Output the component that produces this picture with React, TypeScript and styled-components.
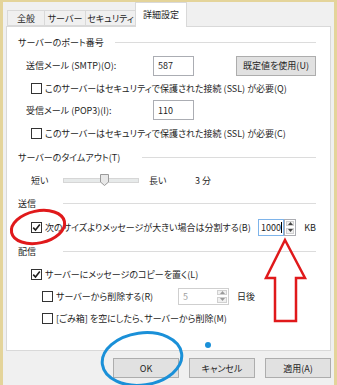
import React from "react";
import styled, { createGlobalStyle } from "styled-components";

const GlobalStyle = createGlobalStyle`
  html, body {
    margin: 0;
    padding: 0;
    background: #f0f0f0;
  }
  body {
    font-family: "Noto Sans CJK JP", "Noto Sans", sans-serif;
    font-size: 9px;
    font-feature-settings: "palt";
    color: #1e1e1e;
  }
`;

const Window = styled.div`
  position: relative;
  width: 337px;
  height: 385px;
  box-sizing: border-box;
  background: #f0f0f0;
  border-top: 2px solid #e4d49a;
  border-left: 3px solid #e4d49a;
  border-right: 3px solid #e4d49a;
  display: flex;
  flex-direction: column;
  overflow: hidden;
`;

const TabStrip = styled.div`
  display: flex;
  align-items: flex-end;
  height: 25px;
  padding-left: 5px;
  margin-bottom: -1px;
  position: relative;
  z-index: 1;
`;

const Tab = styled.div<{ $active?: boolean; $w: number }>`
  box-sizing: border-box;
  width: ${(p) => p.$w}px;
  height: ${(p) => (p.$active ? 25 : 16)}px;
  margin-bottom: ${(p) => (p.$active ? 0 : 1)}px;
  padding-top: ${(p) => (p.$active ? 5 : 0)}px;
  background: ${(p) => (p.$active ? "#fff" : "#f0f0f0")};
  border: 1px solid #d9d9d9;
  border-bottom: ${(p) => (p.$active ? "none" : "1px solid #d9d9d9")};
  margin-left: -1px;
  display: flex;
  align-items: ${(p) => (p.$active ? "flex-start" : "center")};
  justify-content: center;
  line-height: 13px;
  white-space: nowrap;
`;

const Panel = styled.div`
  box-sizing: border-box;
  margin-left: 3px;
  width: 325px;
  height: 325px;
  background: #fff;
  border: 1px solid #d9d9d9;
  padding: 3px 14px 0 11px;
  display: flex;
  flex-direction: column;
`;

const Row = styled.div<{ $h: number; $indent?: number }>`
  height: ${(p) => p.$h}px;
  display: flex;
  align-items: center;
  padding-left: ${(p) => p.$indent ?? 0}px;
  white-space: nowrap;
`;

const HeaderLabel = styled.span<{ $w: number }>`
  width: ${(p) => p.$w}px;
  flex: none;
`;

const HeaderLine = styled.div`
  flex: 1;
  height: 1px;
  background: #dcdcdc;
`;

const FieldLabel = styled.span<{ $w?: number }>`
  width: ${(p) => (p.$w ? `${p.$w}px` : "auto")};
  flex: none;
`;

const TextBox = styled.div<{ $w: number; $h?: number; $focus?: boolean }>`
  box-sizing: border-box;
  width: ${(p) => p.$w}px;
  height: ${(p) => p.$h ?? 20}px;
  border: 1px solid ${(p) => (p.$focus ? "#7eb4ea" : "#abadb3")};
  background: #fff;
  display: flex;
  align-items: center;
  padding-left: ${(p) => (p.$focus ? 2 : 4)}px;
`;

const Caret = styled.span`
  display: inline-block;
  width: 1px;
  height: 11px;
  background: #000;
`;

const PushButton = styled.button<{ $w: number }>`
  box-sizing: border-box;
  width: ${(p) => p.$w}px;
  height: 20px;
  padding: 0;
  border: 1px solid #adadad;
  background: #e1e1e1;
  font-family: inherit;
  font-size: 9px;
  color: #1e1e1e;
  font-feature-settings: "palt";
`;

const RightButton = styled(PushButton)`
  margin-left: auto;
`;

const BoxWrap = styled.span`
  width: 11px;
  height: 11px;
  box-sizing: border-box;
  border: 1px solid #333;
  background: #fff;
  margin-right: 3px;
  flex: none;
  display: flex;
  align-items: center;
  justify-content: center;
`;

const Check = ({ on }: { on?: boolean }) => (
  <BoxWrap>
    {on && (
      <svg width="9" height="9" viewBox="0 0 9 9">
        <path d="M1.2 4.6 L3.5 7 L7.8 1.6" fill="none" stroke="#1e1e1e" strokeWidth="1.6" />
      </svg>
    )}
  </BoxWrap>
);

const SpinCol = styled.div<{ $h: number; $framed?: boolean }>`
  box-sizing: border-box;
  width: 12px;
  height: ${(p) => p.$h}px;
  border: ${(p) => (p.$framed ? "1px solid #abadb3" : "none")};
  background: #fff;
  display: flex;
  flex-direction: column;
  flex: none;
`;

const SpinHalf = styled.div`
  flex: 1;
  margin: 1px;
  background: #f0f0f0;
  border: 1px solid #d0d0d0;
  display: flex;
  align-items: center;
  justify-content: center;
`;

const Spin = ({ h, framed, color = "#444" }: { h: number; framed?: boolean; color?: string }) => (
  <SpinCol $h={h} $framed={framed}>
    <SpinHalf>
      <svg width="5" height="3" viewBox="0 0 5 3">
        <path d="M0 3 L2.5 0 L5 3 Z" fill={color} />
      </svg>
    </SpinHalf>
    <SpinHalf>
      <svg width="5" height="3" viewBox="0 0 5 3">
        <path d="M0 0 L2.5 3 L5 0 Z" fill={color} />
      </svg>
    </SpinHalf>
  </SpinCol>
);

const DisabledSpinBox = styled.div`
  box-sizing: border-box;
  width: 51px;
  height: 17px;
  border: 1px solid #cfcfcf;
  display: flex;
  align-items: center;
  justify-content: space-between;
  padding-left: 4px;
  color: #a0a0a0;
`;

const Track = styled.div`
  position: relative;
  width: 74px;
  height: 3px;
  margin: 0 10px;
  background: #e7eaea;
  border: 1px solid #d6d6d6;
  flex: none;
`;

const Thumb = styled.svg`
  position: absolute;
  left: 36px;
  top: -5px;
`;

const Spacer = styled.span<{ $w: number }>`
  width: ${(p) => p.$w}px;
  flex: none;
`;

const ButtonBar = styled.div`
  display: flex;
  justify-content: flex-end;
  gap: 10px;
  margin-top: 7px;
  padding-right: 3px;
`;

const Overlay = styled.svg`
  position: absolute;
  left: -3px;
  top: -2px;
  pointer-events: none;
  z-index: 5;
`;

const Header = ({ label, w }: { label: string; w: number }) => (
  <Row $h={24}>
    <HeaderLabel $w={w}>{label}</HeaderLabel>
    <HeaderLine />
  </Row>
);

export default function App() {
  return (
    <>
      <GlobalStyle />
      <Window>
        <TabStrip>
          <Tab $w={38}>全般</Tab>
          <Tab $w={42}>サーバー</Tab>
          <Tab $w={51}>セキュリティ</Tab>
          <Tab $w={52} $active>
            詳細設定
          </Tab>
        </TabStrip>
        <Panel>
          <Header label="サーバーのポート番号" w={97} />
          <Row $h={23} $indent={8}>
            <FieldLabel $w={127}>送信メール (SMTP)(O):</FieldLabel>
            <TextBox $w={41}>587</TextBox>
            <RightButton $w={80}>既定値を使用(U)</RightButton>
          </Row>
          <Row $h={22} $indent={13}>
            <Check />
            このサーバーはセキュリティで保護された接続 (SSL) が必要(Q)
          </Row>
          <Row $h={22} $indent={8}>
            <FieldLabel $w={127}>受信メール (POP3)(I):</FieldLabel>
            <TextBox $w={41}>110</TextBox>
          </Row>
          <Row $h={24} $indent={13}>
            <Check />
            このサーバーはセキュリティで保護された接続 (SSL) が必要(C)
          </Row>
          <Header label="サーバーのタイムアウト(T)" w={124} />
          <Row $h={22} $indent={13}>
            <FieldLabel $w={22}>短い</FieldLabel>
            <Track>
              <Thumb width="9" height="12" viewBox="0 0 9 12">
                <path d="M0.5 0.5 H8.5 V8 L4.5 11.5 L0.5 8 Z" fill="#e8e8e8" stroke="#9a9a9a" />
              </Thumb>
            </Track>
            <FieldLabel $w={46}>長い</FieldLabel>3 分
          </Row>
          <Header label="送信" w={45} />
          <Row $h={24} $indent={13}>
            <Check on />
            <FieldLabel $w={213}>次のサイズよりメッセージが大きい場合は分割する(B)</FieldLabel>
            <TextBox $w={27} $h={17} $focus>
              1000
              <Caret />
            </TextBox>
            <Spin h={17} framed />
            <Spacer $w={8} />
            KB
          </Row>
          <Header label="配信" w={45} />
          <Row $h={22} $indent={13}>
            <Check on />
            サーバーにメッセージのコピーを置く(L)
          </Row>
          <Row $h={22} $indent={24}>
            <Check />
            <FieldLabel $w={122}>サーバーから削除する(R)</FieldLabel>
            <DisabledSpinBox>
              5
              <Spin h={15} color="#9a9a9a" />
            </DisabledSpinBox>
            <Spacer $w={8} />
            日後
          </Row>
          <Row $h={22} $indent={24}>
            <Check />
            [ごみ箱] を空にしたら、サーバーから削除(M)
          </Row>
        </Panel>
        <ButtonBar>
          <PushButton $w={66}>OK</PushButton>
          <PushButton $w={66}>キャンセル</PushButton>
          <PushButton $w={66}>適用(A)</PushButton>
        </ButtonBar>
        <Overlay width="337" height="385" viewBox="0 0 337 385">
          <ellipse
            cx="38"
            cy="227"
            rx="27"
            ry="16"
            transform="rotate(-12 38 227)"
            fill="none"
            stroke="#e0191b"
            strokeWidth="3"
          />
          <path
            d="M285 240 L305 278 L296 278 L296 321 L275 321 L275 278 L266 278 Z"
            fill="none"
            stroke="#e0191b"
            strokeWidth="2.5"
          />
          <ellipse
            cx="142"
            cy="359"
            rx="40"
            ry="26"
            transform="rotate(-8 142 359)"
            fill="none"
            stroke="#1a90d8"
            strokeWidth="3"
          />
          <circle cx="208" cy="345" r="3" fill="#1a90d8" />
        </Overlay>
      </Window>
    </>
  );
}
